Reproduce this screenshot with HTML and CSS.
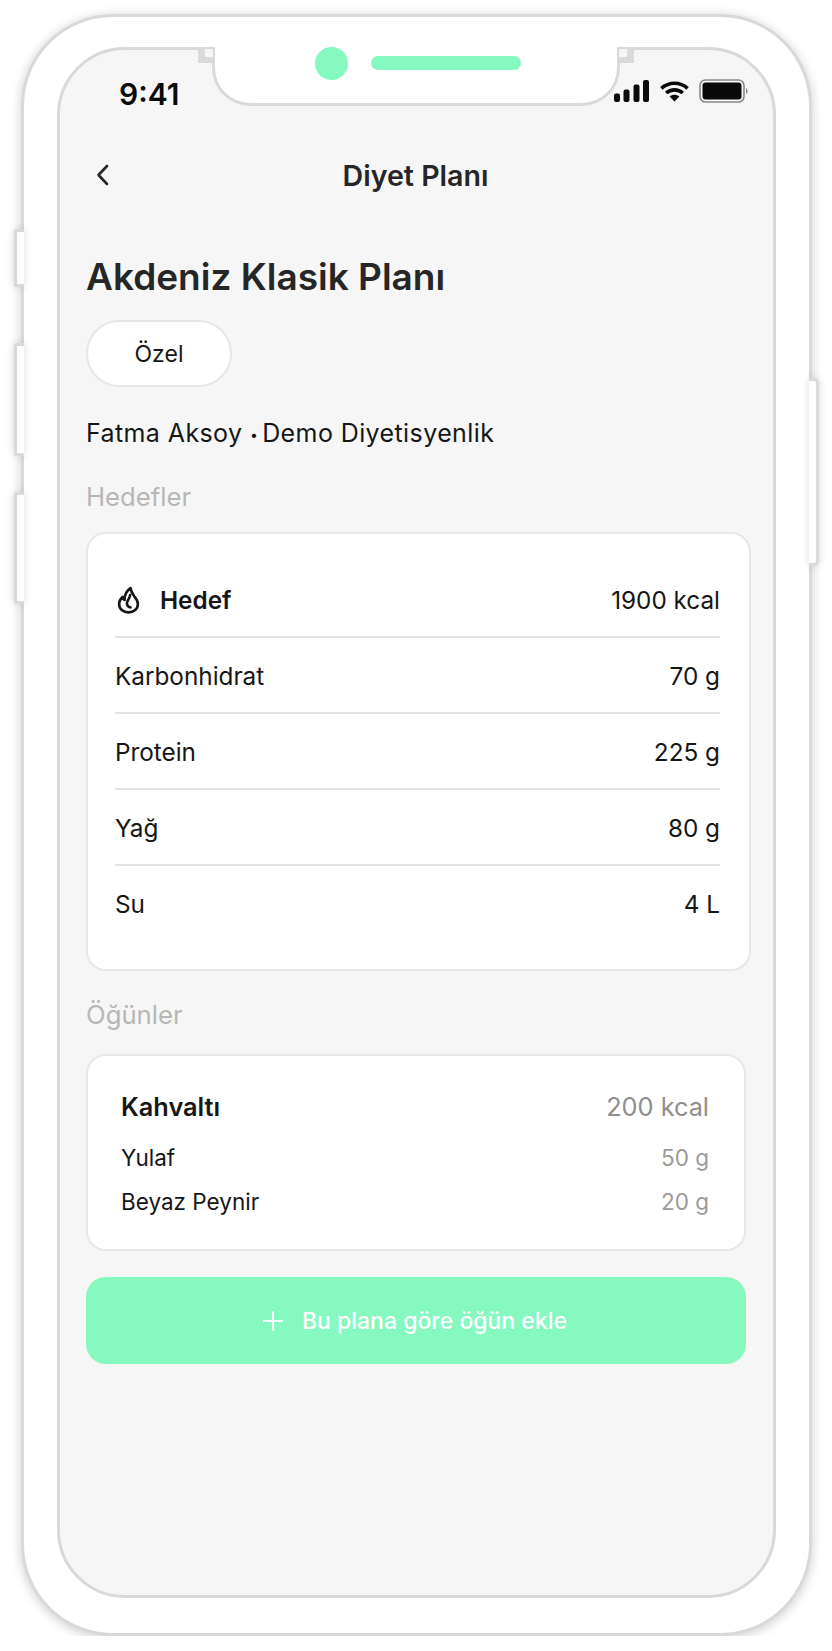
FILE: index.html
```html
<!DOCTYPE html>
<html lang="en">
<head>
    <meta charset="UTF-8">
    <meta name="viewport" content="width=device-width, initial-scale=1.0">
    <title>Diyet Planı</title>
    <link rel="stylesheet" href="styles.css">
</head>
<body>
    <div class="phone">
        <span class="side-btn side-mute"></span>
        <span class="side-btn side-up"></span>
        <span class="side-btn side-down"></span>
        <span class="side-btn side-power"></span>

        <div class="screen">
            <div class="notch">
                <span class="ear ear-left"></span>
                <span class="ear ear-right"></span>
                <span class="camera"></span>
                <span class="speaker"></span>
            </div>

            <div class="status-bar">
                <span class="time">9:41</span>
                <div class="status-icons">
                    <svg width="35" height="22" viewBox="0 0 35 22" fill="#0a0a0a">
                        <rect x="0" y="13.5" width="6" height="8.5" rx="2"/>
                        <rect x="9.5" y="9.5" width="6" height="12.5" rx="2"/>
                        <rect x="19.5" y="4.5" width="6" height="17.5" rx="2"/>
                        <rect x="29" y="0" width="6" height="22" rx="2"/>
                    </svg>
                    <svg width="29" height="21" viewBox="0 0 29 21" fill="none" stroke="#0a0a0a" stroke-width="3.6">
                        <path d="M1.4 7.4C9 0.6 20 0.6 27.6 7.4"/>
                        <path d="M6.2 12C11 7.8 18 7.8 22.8 12"/>
                        <path d="M14.5 20.5L9.6 15.6C12.4 13.2 16.6 13.2 19.4 15.6Z" fill="#0a0a0a" stroke="none"/>
                    </svg>
                    <svg width="49" height="24" viewBox="0 0 49 24">
                        <rect x="1" y="1" width="44" height="22" rx="5.5" fill="none" stroke="#8a8a8a" stroke-width="1.6"/>
                        <rect x="3.5" y="3.5" width="39" height="17" rx="3" fill="#0a0a0a"/>
                        <path d="M47 9C49 10 49 14 47 15Z" fill="#8a8a8a"/>
                    </svg>
                </div>
            </div>

            <div class="nav">
                <svg class="back" width="16" height="24" viewBox="0 0 16 24" fill="none" stroke="#262626" stroke-width="2.6" stroke-linecap="round" stroke-linejoin="round">
                    <path d="M12 3L3.5 12L12 21"/>
                </svg>
                <span class="nav-title">Diyet Planı</span>
            </div>

            <div class="content">
                <h1 class="plan-title">Akdeniz Klasik Planı</h1>
                <div class="pill">Özel</div>
                <p class="author">Fatma Aksoy <span class="dot">•</span>Demo Diyetisyenlik</p>

                <h2 class="section-label">Hedefler</h2>
                <div class="card goals">
                    <div class="goal-row">
                        <span class="goal-main">
                            <svg class="flame" width="23" height="28" viewBox="0 0 22 28" fill="none" stroke="#161616" stroke-width="2.6" stroke-linecap="round" stroke-linejoin="round">
                                <path d="M13 2C13.4 6 15 8 17 10.6C19 13 20.4 15 20.4 18C20.4 23 16.4 26.4 11 26.4C5.6 26.4 1.6 23 1.6 18C1.6 15 3 13 5 11C5.4 12.6 6 13.4 7 14C7 9 9 5 13 2Z"/>
                                <path d="M12.6 9C12.4 12.6 9.4 14.4 9.4 17.4C9.4 19.4 10.8 20.8 13 21.4"/>
                            </svg>
                            <strong>Hedef</strong>
                        </span>
                        <span>1900 kcal</span>
                    </div>
                    <div class="goal-row"><span>Karbonhidrat</span><span>70 g</span></div>
                    <div class="goal-row"><span>Protein</span><span>225 g</span></div>
                    <div class="goal-row"><span>Yağ</span><span>80 g</span></div>
                    <div class="goal-row"><span>Su</span><span>4 L</span></div>
                </div>

                <h2 class="section-label meals-label">Öğünler</h2>
                <div class="card meal">
                    <div class="meal-head"><strong>Kahvaltı</strong><span>200 kcal</span></div>
                    <div class="meal-item"><span>Yulaf</span><span class="amount">50 g</span></div>
                    <div class="meal-item"><span>Beyaz Peynir</span><span class="amount">20 g</span></div>
                </div>

                <div class="add-btn">
                    <svg width="20" height="20" viewBox="0 0 20 20" stroke="#fff" stroke-width="2" stroke-linecap="round">
                        <path d="M10 1V19M1 10H19"/>
                    </svg>
                    <span>Bu plana göre öğün ekle</span>
                </div>
            </div>
        </div>
    </div>
</body>
</html>
```

FILE: styles.css
```css
* {
    box-sizing: border-box;
}

body {
    margin: 0;
    background-color: #fff;
    font-family: Inter, "Noto Sans", sans-serif;
    color: #161616;
}

.phone {
    position: relative;
    width: 791px;
    height: 1622px;
    margin: 14px 0 0 21px;
    padding: 30px 33px 0;
    background-color: #fff;
    border: 3px solid #d9d9d9;
    border-radius: 92px;
    box-shadow: 0 2px 12px rgba(0, 0, 0, 0.2);
}

.side-btn {
    position: absolute;
    width: 10px;
    background-color: #fff;
    border: 3px solid #d9d9d9;
    box-shadow: 0 0 10px rgba(0, 0, 0, 0.14);
}

.side-mute {
    left: -10px;
    top: 212px;
    height: 58px;
    border-right: 0;
    border-radius: 3px 0 0 3px;
}

.side-up {
    left: -10px;
    top: 326px;
    height: 113px;
    border-right: 0;
    border-radius: 3px 0 0 3px;
}

.side-down {
    left: -10px;
    top: 475px;
    height: 112px;
    border-right: 0;
    border-radius: 3px 0 0 3px;
}

.side-power {
    right: -10px;
    top: 361px;
    height: 188px;
    border-left: 0;
    border-radius: 0 5px 5px 0;
}

.screen {
    position: relative;
    height: 1551px;
    background-color: #f6f6f6;
    border: 3px solid #d9d9d9;
    border-radius: 68px;
}

/* notch sits on top of the screen border */
.notch {
    position: absolute;
    top: -3px;
    left: 152px;
    width: 408px;
    height: 59px;
    background-color: #fff;
    border: 3px solid #d9d9d9;
    border-top: 0;
    border-radius: 0 0 38px 38px;
}

.ear {
    position: absolute;
    top: 0;
    width: 15px;
    height: 16px;
    background-color: #d9d9d9;
}

.ear::after {
    content: "";
    position: absolute;
    top: 2px;
    width: 8px;
    height: 8px;
    background-color: #f6f6f6;
}

.ear-left {
    left: -17px;
    border-radius: 0 4px 0 0;
}

.ear-left::after {
    right: 0;
}

.ear-right {
    right: -17px;
    border-radius: 4px 0 0 0;
}

.ear-right::after {
    left: 0;
}

.camera {
    position: absolute;
    left: 100px;
    top: 0;
    width: 33px;
    height: 33px;
    background-color: #86f9bf;
    border-radius: 50%;
}

.speaker {
    position: absolute;
    left: 156px;
    top: 9px;
    width: 150px;
    height: 14px;
    background-color: #86f9bf;
    border-radius: 7px;
}

.status-bar {
    display: flex;
    justify-content: space-between;
    align-items: center;
    height: 46px;
    margin-top: 21px;
    padding: 0 25px 0 59px;
}

.time {
    font-size: 30px;
    font-weight: 600;
    color: #0a0a0a;
}

.status-icons {
    display: flex;
    align-items: center;
    gap: 10.5px;
    margin-bottom: 6px;
}

.nav {
    position: relative;
    display: flex;
    justify-content: center;
    align-items: center;
    margin-top: 38px;
    padding-right: 2px;
    height: 40px;
}

.back {
    position: absolute;
    left: 35px;
    top: 8px;
}

.nav-title {
    font-size: 28.6px;
    font-weight: 600;
    color: #262626;
}

.content {
    padding: 60px 26px 0 26px;
}

.plan-title {
    margin: 0;
    font-size: 37px;
    line-height: 44px;
    font-weight: 600;
    color: #262626;
}

.pill {
    display: flex;
    justify-content: center;
    align-items: center;
    width: 146px;
    height: 67px;
    margin-top: 21px;
    background-color: #fff;
    border: 2px solid #e7e7e7;
    border-radius: 34px;
    font-size: 23px;
}

.author {
    margin: 30px 0 0;
    font-size: 25px;
    line-height: 32px;
    letter-spacing: 0.4px;
}

.dot {
    font-size: 14px;
    vertical-align: 2px;
    margin-right: 4px;
}

.section-label {
    margin: 30px 0 0;
    font-size: 25.7px;
    line-height: 32px;
    font-weight: 400;
    color: #b6b6b6;
}

.card {
    background-color: #fff;
    border: 2px solid #e7e7e7;
    border-radius: 20px;
}

.goals {
    width: 665px;
    margin-top: 19px;
    padding: 28px 29px 27px 27px;
}

.goal-row {
    display: flex;
    justify-content: space-between;
    align-items: center;
    height: 76px;
    padding-top: 2px;
    font-size: 24.3px;
    border-bottom: 2px solid #e4e4e4;
}

.goal-row:last-child {
    border-bottom-color: transparent;
}

.goal-main {
    display: flex;
    align-items: center;
    gap: 20px;
}

.flame {
    margin-left: 2px;
}

.goal-main strong {
    font-weight: 600;
}

.meals-label {
    margin-top: 28px;
}

.meal {
    width: 660px;
    margin-top: 23px;
    padding: 31px 35px 32px 33px;
}

.meal-head {
    display: flex;
    justify-content: space-between;
    margin-bottom: 16px;
    font-size: 25.3px;
    line-height: 40px;
}

.meal-head strong {
    font-weight: 600;
}

.meal-head span {
    color: #8e8e8e;
}

.meal-item {
    display: flex;
    justify-content: space-between;
    margin-top: 14px;
    font-size: 22.5px;
    line-height: 30px;
}

.amount {
    color: #9a9a9a;
}

.add-btn {
    display: flex;
    justify-content: center;
    align-items: center;
    gap: 19px;
    width: 660px;
    height: 87px;
    margin-top: 26px;
    padding-right: 2px;
    background-color: #86f9bf;
    border-radius: 20px;
    color: #fff;
    font-size: 23px;
    font-weight: 500;
}
```
